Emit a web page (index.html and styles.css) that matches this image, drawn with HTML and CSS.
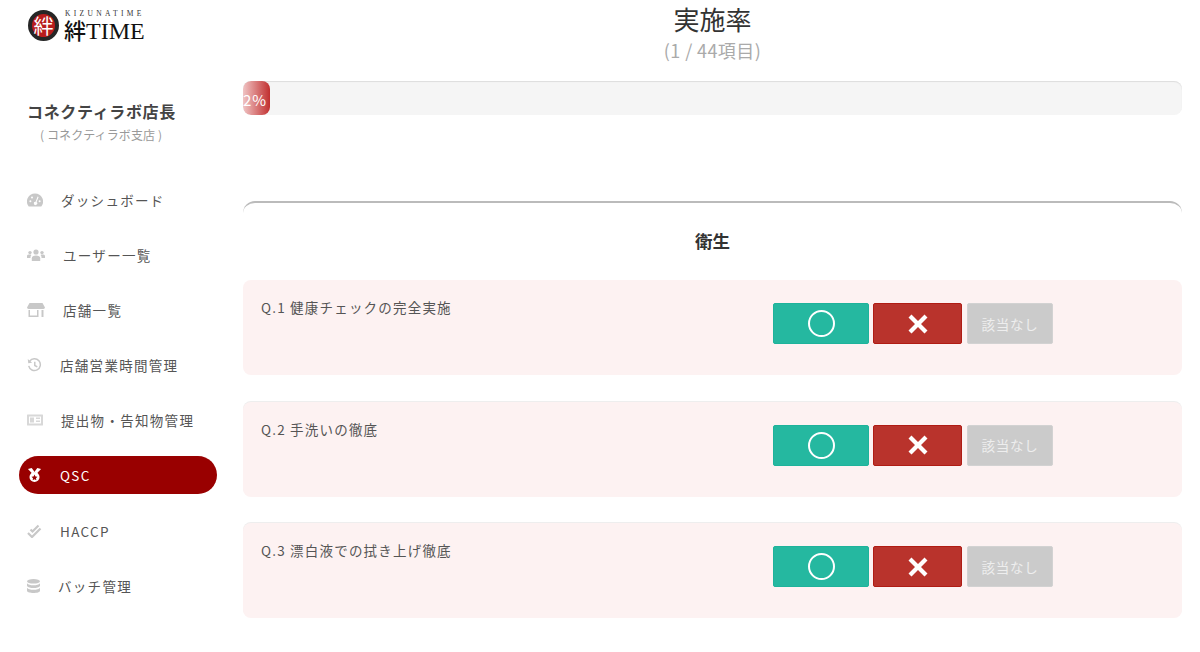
FILE: index.html
```html
<!DOCTYPE html>
<html lang="ja">
<head>
<meta charset="utf-8">
<title>QSC</title>
<link rel="stylesheet" href="styles.css">
</head>
<body>
<div class="page">
  <aside class="sidebar">
    <div class="logo">
      <div class="logo-mark"><span class="logo-kanji">絆</span></div>
      <div class="logo-text">
        <div class="logo-small">KIZUNATIME</div>
        <div class="logo-big"><span class="logo-big-k">絆</span>TIME</div>
      </div>
    </div>
    <div class="profile">
      <div class="profile-name">コネクティラボ店長</div>
      <div class="profile-branch">( コネクティラボ支店 )</div>
    </div>
    <nav class="nav">
      <a class="nav-item">
        <svg class="icon w16" viewBox="0 0 16 14"><path d="M8 0.5A8 8 0 0 0 1.7 13.5H14.3A8 8 0 0 0 8 0.5Z"/><g fill="#fff"><circle cx="3.4" cy="8.2" r="1"/><circle cx="5" cy="4.4" r="1"/><circle cx="12.6" cy="8.2" r="1"/><path d="M10.6 3.6l1 .5-2 5a1.7 1.7 0 1 1-1-.4z"/></g></svg>
        <span>ダッシュボード</span>
      </a>
      <a class="nav-item">
        <svg class="icon w18" viewBox="0 0 18 12"><circle cx="9" cy="3" r="2.6"/><circle cx="3" cy="3.6" r="1.7"/><circle cx="15" cy="3.6" r="1.7"/><path d="M4.8 12V9.2C4.8 7.3 6.4 6.4 9 6.4s4.2.9 4.2 2.8V12Z"/><path d="M0 9V7.2C0 6 1 5.6 2.8 5.6c.7 0 1.2.1 1.6.3-.6.7-.9 1.5-.9 2.4V9Z"/><path d="M18 9V7.2C18 6 17 5.6 15.2 5.6c-.7 0-1.2.1-1.6.3.6.7.9 1.5.9 2.4V9Z"/></svg>
        <span>ユーザー一覧</span>
      </a>
      <a class="nav-item">
        <svg class="icon w18" viewBox="0 0 18 14"><path d="M2.5 0H15.5L18 4.5A2 2 0 0 1 16 6H2A2 2 0 0 1 0 4.5Z"/><path d="M1.5 7H3V12.5H10V7H11.5V14H1.5Z"/><path d="M14.5 7H16.5V14H14.5Z"/></svg>
        <span>店舗一覧</span>
      </a>
      <a class="nav-item">
        <svg class="icon w15" viewBox="0 0 15 15"><path class="stroke" d="M2.3 3.5A6.3 6.3 0 1 1 1.3 8.5"/><path d="M0.3 1.2L0.8 5.6L5 5Z"/><path class="stroke" d="M7.8 4V8L10.5 9.6"/></svg>
        <span>店舗営業時間管理</span>
      </a>
      <a class="nav-item">
        <svg class="icon w16 icon-light" viewBox="0 0 16 11"><path fill-rule="evenodd" d="M0.5 0H15.5A.5.5 0 0 1 16 .5V10.5A.5.5 0 0 1 15.5 11H0.5A.5.5 0 0 1 0 10.5V.5A.5.5 0 0 1 0.5 0ZM2 2V9H14V2Z"/><path d="M3 3H7V8H3ZM9 3H13V4.5H9ZM9 6H13V7.5H9Z"/></svg>
        <span>提出物・告知物管理</span>
      </a>
      <a class="nav-item nav-active">
        <svg class="icon w15" viewBox="0 0 14 15"><path d="M0 1L4 0L7 4L4.5 6Z"/><path d="M14 1L10 0L7 4L9.5 6Z"/><path fill-rule="evenodd" d="M7 4.2A5.4 5.4 0 1 1 7 15A5.4 5.4 0 1 1 7 4.2ZM7 7L8 9L10.2 9.4L8.6 10.9L9 13L7 12L5 13L5.4 10.9L3.8 9.4L6 9Z"/></svg>
        <span>QSC</span>
      </a>
      <a class="nav-item">
        <svg class="icon w15" viewBox="0 0 15 14"><path class="stroke-bold" d="M1 9L5 13L13.5 4.5"/><path class="stroke-bold" d="M3.500 5.500L5.500 7.500L11.500 1.500"/></svg>
        <span>HACCP</span>
      </a>
      <a class="nav-item">
        <svg class="icon w13" viewBox="0 0 13 14"><ellipse cx="6.5" cy="2.3" rx="6.5" ry="2.3"/><path d="M0 4.2C1 5.7 3.5 6.2 6.5 6.2S12 5.7 13 4.2V7C12 8.5 9.5 9 6.5 9S1 8.5 0 7Z"/><path d="M0 8.8C1 10.3 3.5 10.8 6.5 10.8S12 10.3 13 8.8V11.7C13 13 10 14 6.5 14S0 13 0 11.7Z"/></svg>
        <span>バッチ管理</span>
      </a>
    </nav>
  </aside>
  <main class="main">
    <header class="head">
      <h1 class="title">実施率</h1>
      <p class="subtitle">(1 / 44項目)</p>
    </header>
    <div class="progress"><div class="progress-bar" style="width:2.9%">2%</div></div>
    <section class="card">
      <h2 class="card-title">衛生</h2>
      <div class="question">
        <p class="q-text">Q.1 健康チェックの完全実施</p>
        <div class="actions">
          <button class="btn btn-ok"><span class="ring"></span></button>
          <button class="btn btn-ng"><svg class="cross" viewBox="0 0 20 20"><path d="M3.5 0.5L10 7L16.5 0.5L19.5 3.5L13 10L19.5 16.5L16.5 19.5L10 13L3.5 19.5L0.5 16.5L7 10L0.5 3.5Z"/></svg></button>
          <button class="btn btn-na">該当なし</button>
        </div>
      </div>
      <div class="question">
        <p class="q-text">Q.2 手洗いの徹底</p>
        <div class="actions">
          <button class="btn btn-ok"><span class="ring"></span></button>
          <button class="btn btn-ng"><svg class="cross" viewBox="0 0 20 20"><path d="M3.5 0.5L10 7L16.5 0.5L19.5 3.5L13 10L19.5 16.5L16.5 19.5L10 13L3.5 19.5L0.5 16.5L7 10L0.5 3.5Z"/></svg></button>
          <button class="btn btn-na">該当なし</button>
        </div>
      </div>
      <div class="question">
        <p class="q-text">Q.3 漂白液での拭き上げ徹底</p>
        <div class="actions">
          <button class="btn btn-ok"><span class="ring"></span></button>
          <button class="btn btn-ng"><svg class="cross" viewBox="0 0 20 20"><path d="M3.5 0.5L10 7L16.5 0.5L19.5 3.5L13 10L19.5 16.5L16.5 19.5L10 13L3.5 19.5L0.5 16.5L7 10L0.5 3.5Z"/></svg></button>
          <button class="btn btn-na">該当なし</button>
        </div>
      </div>
    </section>
  </main>
</div>
</body>
</html>
```
FILE: styles.css
```css
* { box-sizing: border-box; }
html, body { margin: 0; height: 100%; overflow: hidden; background: #fff; }
body { font-family: "Noto Sans CJK JP", "Noto Sans", sans-serif; color: #444; }
.page { display: flex; width: 1200px; height: 652px; }

.sidebar { width: 243px; flex: none; padding: 9px 0 0 0; }
.logo { display: flex; align-items: center; gap: 5px; margin-left: 28px; height: 33px; }
.logo-mark { width: 31px; height: 31px; border-radius: 50%; background: #b81c1c; border: 4px solid #262626; display: flex; align-items: center; justify-content: center; flex: none; }
.logo-kanji { color: #fff; font-size: 20px; line-height: 23px; font-weight: 400; }
.logo-text { display: flex; flex-direction: column; margin-top: -2px; }
.logo-small { font-family: "Liberation Serif", serif; font-size: 7.5px; line-height: 8px; letter-spacing: 3.35px; color: #333; padding-left: 1px; white-space: nowrap; height: 8px; }
.logo-big { font-family: "Liberation Serif", serif; font-size: 24px; line-height: 22px; color: #111; white-space: nowrap; height: 22px; }
.logo-big-k { font-size: 22px; line-height: 22px; font-weight: 500; font-family: "Noto Sans CJK JP", sans-serif; }

.profile { margin-top: 57px; padding-left: 27px; }
.profile-name { font-size: 16px; line-height: 24px; font-weight: 700; color: #444; letter-spacing: 0.65px; }
.profile-branch { font-size: 12px; line-height: 18px; color: #999; margin-top: 3px; padding-left: 13px; letter-spacing: 0.1px; }

.nav { margin-top: 36.5px; display: flex; flex-direction: column; gap: 17.2px; margin-left: 19px; width: 198px; }
.nav-item { display: flex; align-items: center; gap: 18px; height: 38px; padding-left: 8px; border-radius: 19px; font-size: 13.5px; letter-spacing: 1.3px; color: #555; white-space: nowrap; }
.nav-active { background: #990000; color: #fff; }
.icon { display: block; flex: none; height: 14px; fill: #c8c8c8; }
.icon-light { fill: #d8d8d8; }
.nav-active .icon { fill: #fff; }
.stroke { fill: none; stroke: #c8c8c8; stroke-width: 1.6; }
.stroke-bold { fill: none; stroke: #c8c8c8; stroke-width: 2.2; }
.w13 { width: 13px; }
.w15 { width: 15px; }
.w16 { width: 16px; }
.w18 { width: 18px; }

.main { width: 939px; flex: none; }
.head { text-align: center; height: 81px; }
.title { margin: 0; font-size: 26px; line-height: 38px; font-weight: 400; color: #333; }
.subtitle { margin: 0; font-size: 18px; line-height: 24px; color: #aaa; letter-spacing: 0.4px; }

.progress { height: 34px; background: #f5f5f5; border-radius: 8px; box-shadow: inset 0 1px 1px #ddd; overflow: hidden; }
.progress-bar { height: 34px; border-radius: 8px; background: linear-gradient(to right, #f0c4c4, #c12f2f); color: #fff; font-size: 15px; letter-spacing: 1px; line-height: 37px; text-align: left; white-space: nowrap; }

.card { border-top: 2px solid #bbb; border-radius: 12px 12px 0 0; margin-top: 86px; }
.card-title { margin: 0; font-size: 17.5px; line-height: 26px; font-weight: 700; color: #333; text-align: center; padding-top: 25px; height: 77px; }
.question { height: 95px; background: #fdf2f2; border-radius: 8px; display: flex; padding: 17px 0 0 18px; margin-bottom: 26.5px; }
.question + .question { box-shadow: 0 -1px 0 #eee; }
.q-text { margin: 0; width: 512px; font-size: 13.5px; line-height: 20px; letter-spacing: 1.2px; color: #555; }
.actions { display: flex; gap: 4px; padding-top: 6px; align-items: flex-start; }
.btn { height: 41px; padding: 0; border-radius: 2px; border: 1px solid; display: flex; align-items: center; justify-content: center; font-family: inherit; }
.btn-ok { width: 96px; background: #25b8a0; border-color: #1eb39b; }
.btn-ng { width: 89px; background: #b9332c; border-color: #b01c14; }
.btn-na { width: 86px; margin-left: 1px; background: #cbcbcb; border-color: #d2d2d2; color: #eee; font-size: 13.5px; letter-spacing: 0.7px; }
.ring { width: 27px; height: 27px; border-radius: 50%; border: 2.5px solid #fff; }
.cross { width: 20px; height: 20px; fill: #fff; }
```
